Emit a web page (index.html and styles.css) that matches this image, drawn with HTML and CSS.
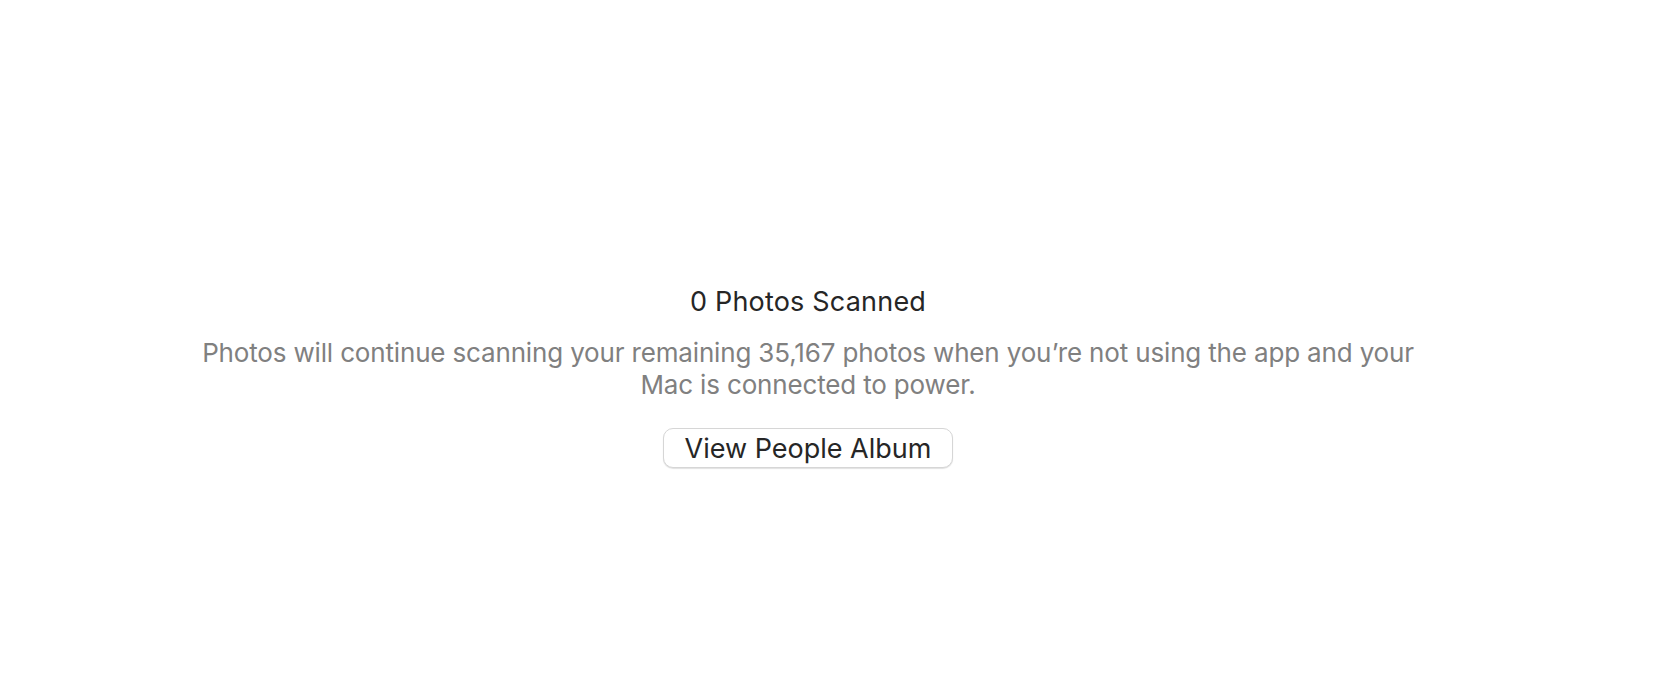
FILE: index.html
```html
<!DOCTYPE html>
<html lang="en">
<head>
<meta charset="utf-8">
<title>People</title>
<link rel="stylesheet" href="styles.css">
</head>
<body>
<main class="scan-status">
  <h1 class="scan-title">0 Photos Scanned</h1>
  <p class="scan-desc">Photos will continue scanning your remaining 35,167 photos when you’re not using the app and your Mac is connected to power.</p>
  <button class="scan-button" type="button">View People Album</button>
</main>
</body>
</html>
```
FILE: styles.css
```css
html, body {
  margin: 0;
  padding: 0;
  background: #ffffff;
}

body {
  font-family: Inter, "Noto Sans", "Liberation Sans", sans-serif;
  -webkit-font-smoothing: antialiased;
}

.scan-status {
  width: 1616px;
  height: 684px;
  box-sizing: border-box;
  padding-top: 286px;
  display: flex;
  flex-direction: column;
  align-items: center;
}

.scan-title {
  margin: 0;
  font-size: 27px;
  line-height: 32px;
  font-weight: 400;
  letter-spacing: 0.2px;
  color: #262626;
}

.scan-desc {
  margin: 19px 0 0;
  max-width: 1240px;
  font-size: 26px;
  line-height: 32px;
  font-weight: 400;
  letter-spacing: -0.16px;
  color: #808080;
  text-align: center;
}

.scan-button {
  margin-top: 27px;
  height: 40px;
  padding: 0 21px;
  font-family: inherit;
  font-size: 27px;
  letter-spacing: 0;
  color: #262626;
  background: #ffffff;
  border: 1px solid #d6d6d6;
  border-radius: 10px;
  box-shadow: 0 1px 1px rgba(0, 0, 0, 0.12);
}
```
